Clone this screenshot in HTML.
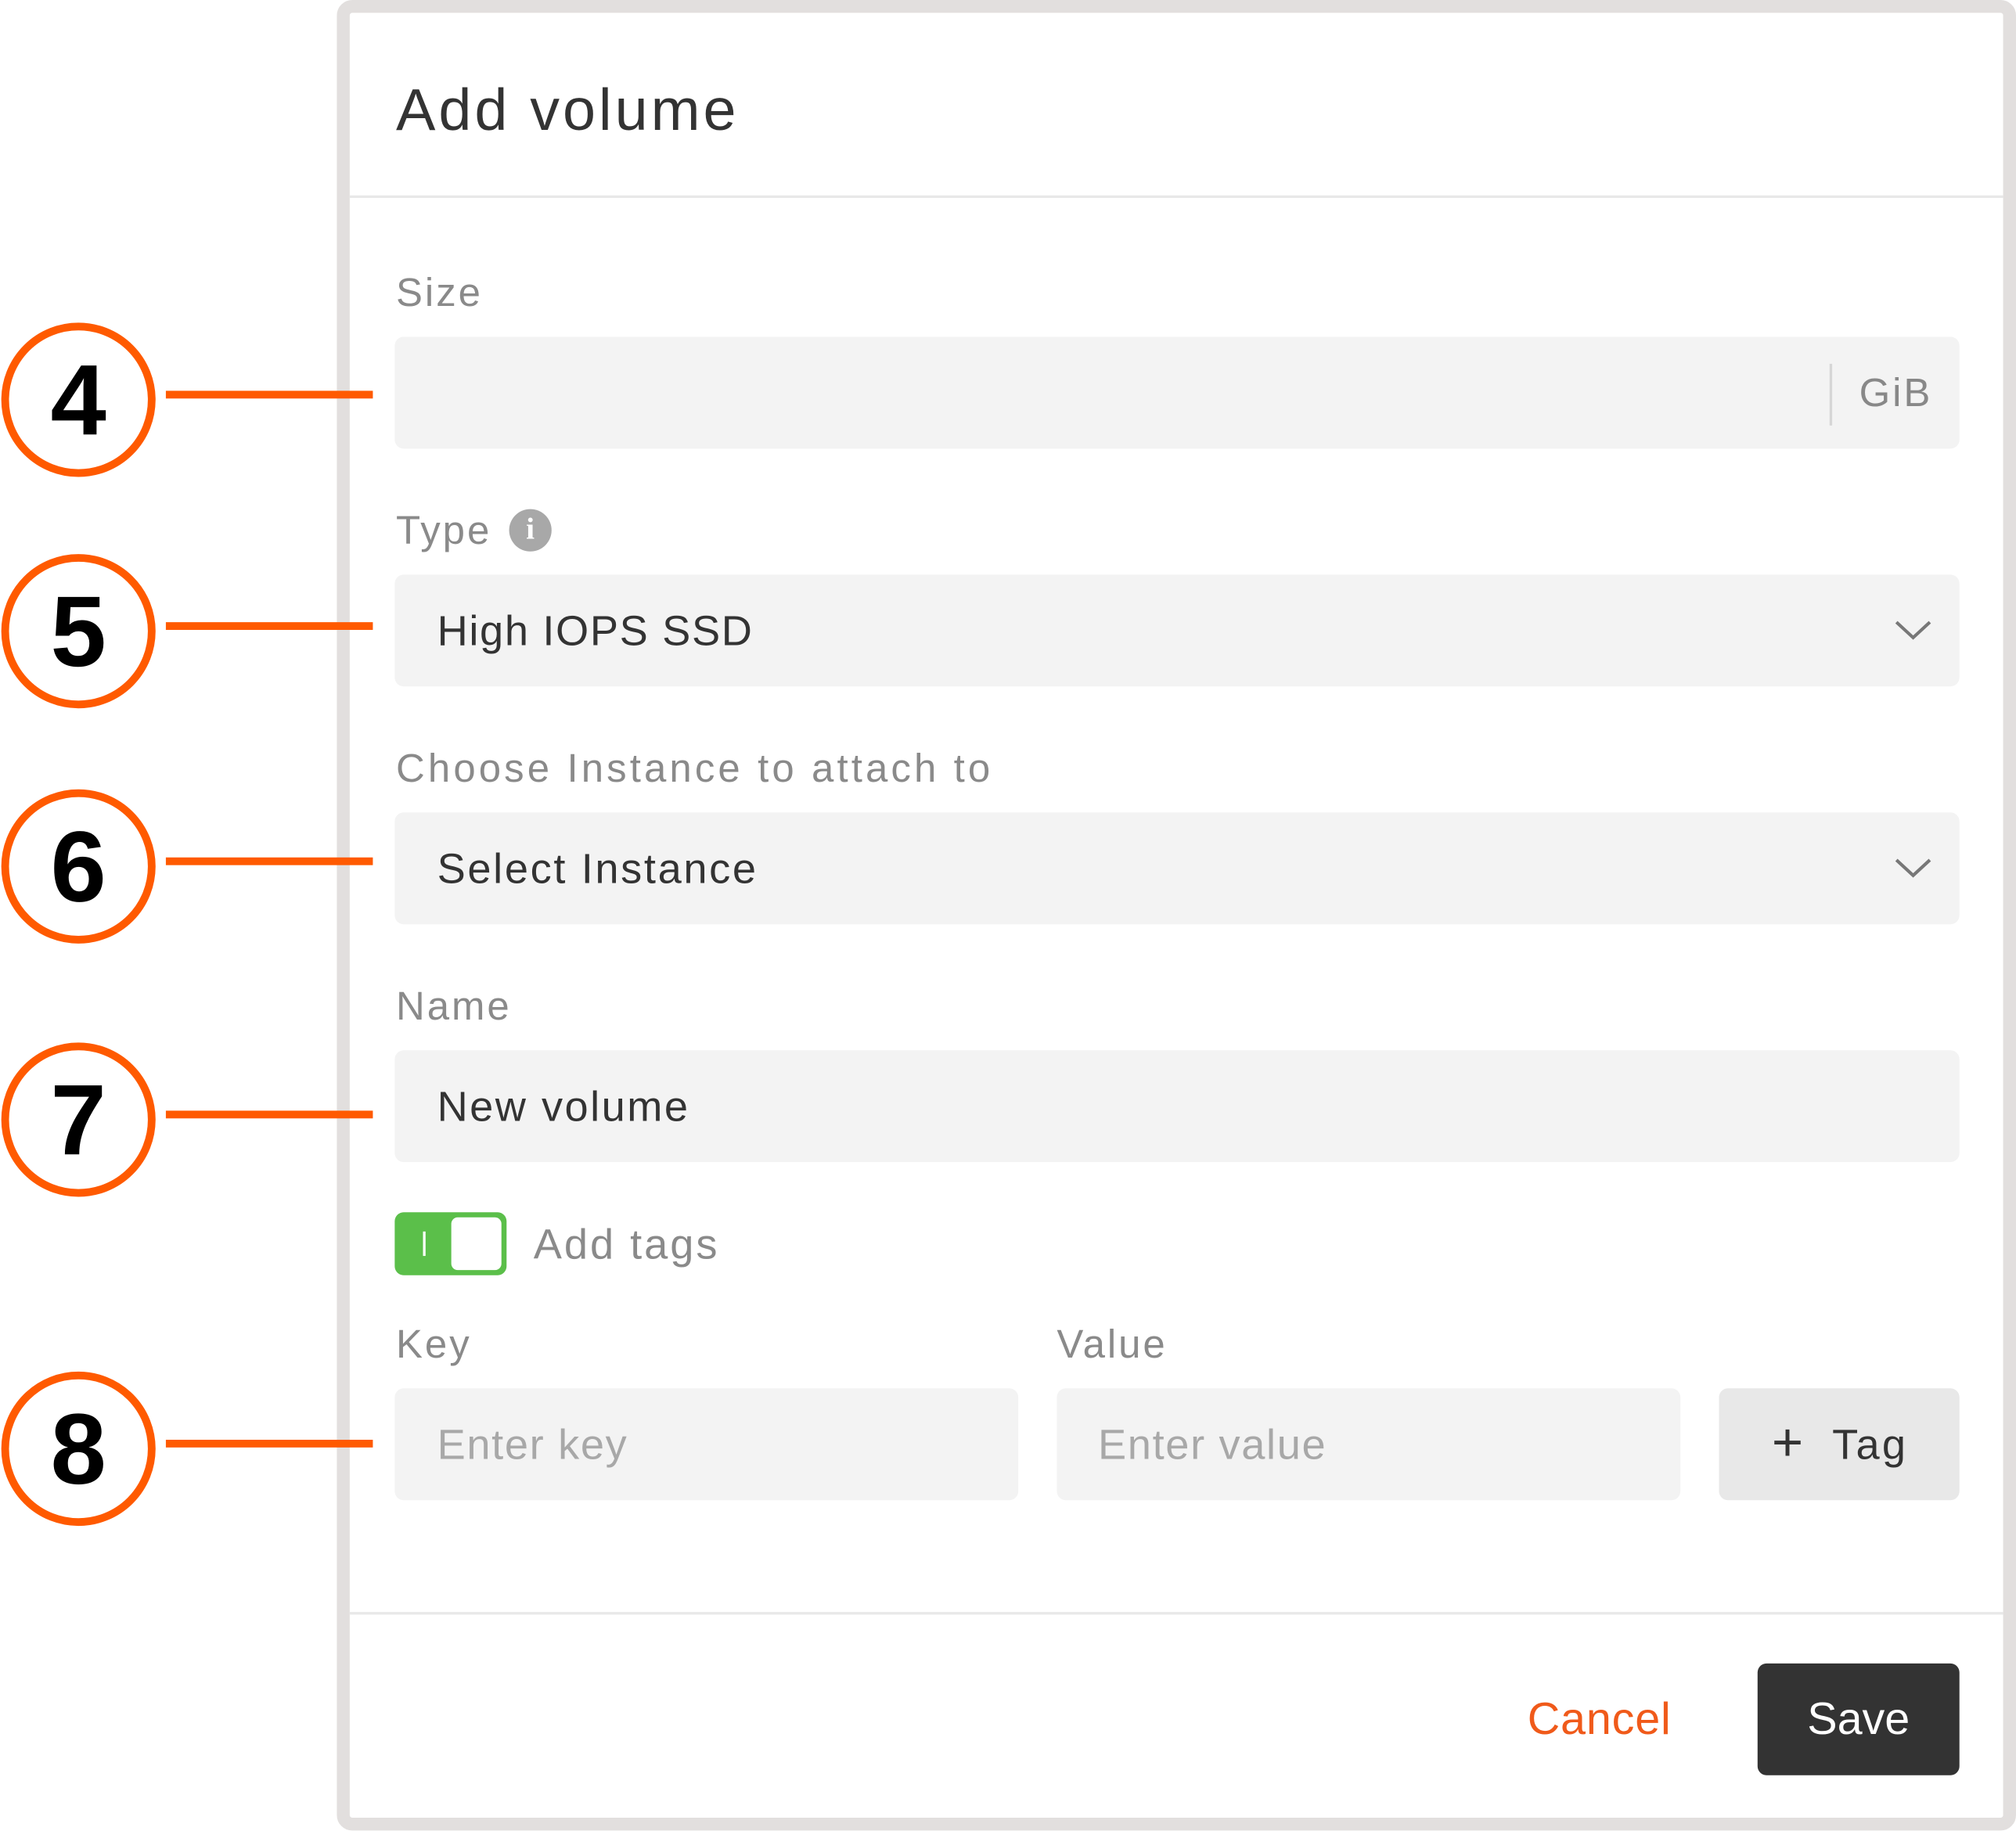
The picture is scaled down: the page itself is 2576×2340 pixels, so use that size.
<!DOCTYPE html>
<html><head><meta charset="utf-8"><style>
html,body{margin:0;padding:0;background:#fff;overflow:hidden}
body{width:2576px;height:2340px}
#w{position:absolute;left:0;top:0;width:1568px;height:1424px;transform:scale(1.642857);transform-origin:0 0;font-family:"Liberation Sans",sans-serif}
.a{position:absolute}
.panel{left:262px;top:0;width:1286px;height:1404px;border:10px solid #e2dfde;border-radius:12px;background:#fff}
.lbl{font-size:31px;color:#8a8a8a;line-height:1;letter-spacing:1.8px}
.box{background:#f3f3f3;border-radius:7px;height:87px}
.txt{font-size:33px;color:#333;line-height:1;letter-spacing:1px}
.ph{font-size:33px;color:#a8a8a8;line-height:1;letter-spacing:1px}
.circ{width:108px;height:108px;border:6px solid #ff5a00;border-radius:50%;background:#fff;text-align:center;line-height:108px;font-size:78px;font-weight:bold;color:#000;left:1px}
.ln{left:129px;width:161px;height:6px;background:#ff5a00}
.chev{width:30px;height:16px}
</style></head><body><div id="w">
<div class="a panel"></div>
<div class="a" style="left:308px;top:62px;font-size:46px;color:#333;line-height:1;letter-spacing:2.4px">Add volume</div>
<div class="a" style="left:272px;top:152px;width:1286px;height:2px;background:#e8e8e8"></div>

<div class="a lbl" style="left:308px;top:212px">Size</div>
<div class="a box" style="left:307px;top:262px;width:1217px"></div>
<div class="a" style="left:1423px;top:283px;width:2px;height:48px;background:#d6d6d6"></div>
<div class="a lbl" style="left:1446px;top:290px;color:#888">GiB</div>

<div class="a lbl" style="left:308px;top:397px">Type</div>
<div class="a" style="left:396px;top:396px;width:33px;height:33px;border-radius:50%;background:#a8a8a8;color:#fff;font-weight:bold;font-size:24px;text-align:center;line-height:33px;font-family:'Liberation Serif',serif">i</div>
<div class="a box" style="left:307px;top:447px;width:1217px"></div>
<div class="a txt" style="left:340px;top:474px">High IOPS SSD</div>
<svg class="a chev" style="left:1473px;top:482px" viewBox="0 0 30 16"><path d="M2 2 L15 14 L28 2" fill="none" stroke="#777" stroke-width="2.5"/></svg>

<div class="a lbl" style="left:308px;top:582px;letter-spacing:2.5px">Choose Instance to attach to</div>
<div class="a box" style="left:307px;top:632px;width:1217px"></div>
<div class="a txt" style="left:340px;top:659px;letter-spacing:1.6px">Select Instance</div>
<svg class="a chev" style="left:1473px;top:667px" viewBox="0 0 30 16"><path d="M2 2 L15 14 L28 2" fill="none" stroke="#777" stroke-width="2.5"/></svg>

<div class="a lbl" style="left:308px;top:767px">Name</div>
<div class="a box" style="left:307px;top:817px;width:1217px"></div>
<div class="a txt" style="left:340px;top:844px;letter-spacing:1.5px">New volume</div>

<div class="a" style="left:307px;top:943px;width:87px;height:49px;background:#5bbf4a;border-radius:7px"></div>
<div class="a" style="left:351px;top:947px;width:39px;height:41px;background:#fff;border-radius:5px"></div>
<div class="a" style="left:329px;top:958px;width:2px;height:19px;background:#fff"></div>
<div class="a lbl" style="left:415px;top:951px;font-size:33px">Add tags</div>

<div class="a lbl" style="left:308px;top:1030px">Key</div>
<div class="a lbl" style="left:822px;top:1030px">Value</div>
<div class="a box" style="left:307px;top:1080px;width:485px"></div>
<div class="a ph" style="left:340px;top:1107px">Enter key</div>
<div class="a box" style="left:822px;top:1080px;width:485px"></div>
<div class="a ph" style="left:854px;top:1107px">Enter value</div>
<div class="a box" style="left:1337px;top:1080px;width:187px;background:#e8e8e8"></div>
<div class="a txt" style="left:1378px;top:1101px;font-size:42px">+</div>
<div class="a txt" style="left:1425px;top:1107px;letter-spacing:2px">Tag</div>

<div class="a" style="left:272px;top:1254px;width:1286px;height:2px;background:#e8e8e8"></div>
<div class="a" style="left:1188px;top:1320px;font-size:35px;color:#f05a1a;line-height:1;letter-spacing:0.5px">Cancel</div>
<div class="a" style="left:1367px;top:1294px;width:157px;height:87px;background:#333;border-radius:7px;color:#fff;font-size:35px;text-align:center;line-height:87px">Save</div>

<div class="a circ" style="top:251px">4</div><div class="a ln" style="top:304px"></div>
<div class="a circ" style="top:431px">5</div><div class="a ln" style="top:484px"></div>
<div class="a circ" style="top:614px">6</div><div class="a ln" style="top:667px"></div>
<div class="a circ" style="top:811px">7</div><div class="a ln" style="top:864px"></div>
<div class="a circ" style="top:1067px">8</div><div class="a ln" style="top:1120px"></div>
</div></body></html>
